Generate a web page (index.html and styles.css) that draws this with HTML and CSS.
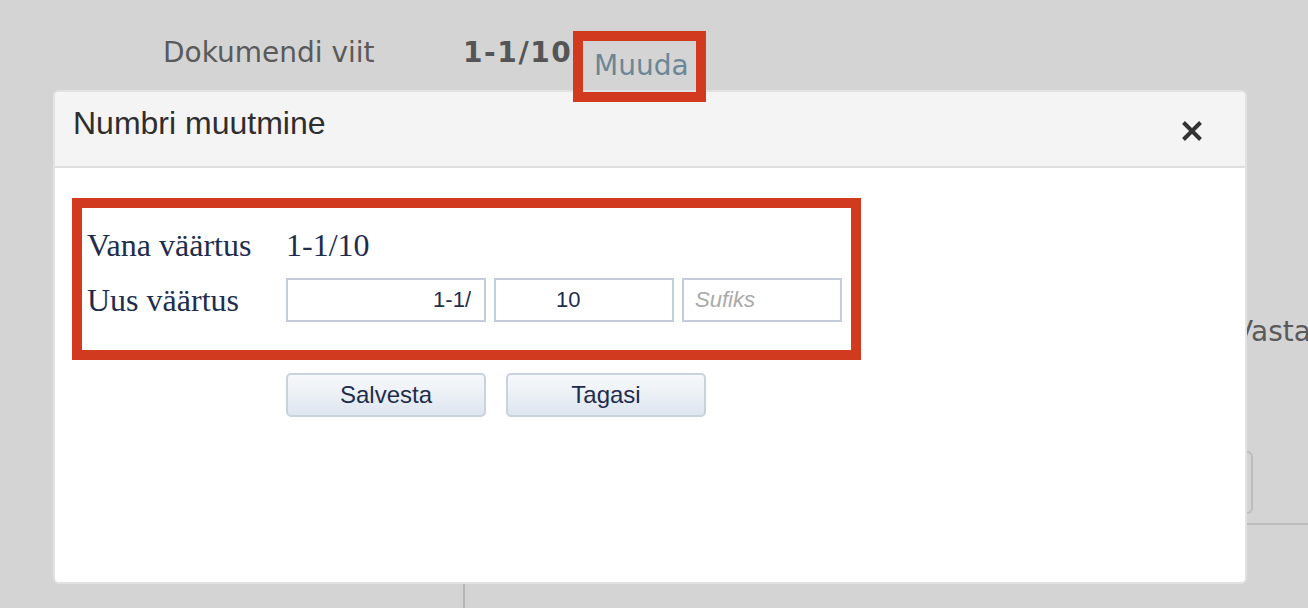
FILE: index.html
```html
<!DOCTYPE html>
<html lang="et">
<head>
<meta charset="utf-8">
<title>Numbri muutmine</title>
<link rel="stylesheet" href="styles.css">
</head>
<body>
<div class="page">
  <div class="doc-row">
    <span class="doc-label">Dokumendi viit</span>
    <span class="doc-value">1-1/10</span>
    <span class="mark mark-link"><a class="link" href="#">Muuda</a></span>
  </div>
  <div class="resp-row"><span class="resp-label">Vastamise tähtaeg</span></div>
  <div class="box-row"><div class="textbox"></div></div>
  <div class="lower"><div class="lower-col"></div></div>
</div>

<div class="dialog">
  <div class="dialog-head">
    <h2 class="dialog-title">Numbri muutmine</h2>
    <button class="close" type="button" aria-label="Sulge">
      <svg width="22" height="22" viewBox="0 0 22 22"><path d="M2.5 2.5L19.5 19.5M19.5 2.5L2.5 19.5" stroke="#333" stroke-width="4" fill="none"/></svg>
    </button>
  </div>
  <div class="dialog-body">
    <div class="mark mark-form">
      <div class="form-grid">
        <div class="f-label">Vana väärtus</div>
        <div class="f-value">1-1/10</div>
        <div class="f-label">Uus väärtus</div>
        <div class="f-inputs">
          <input class="inp inp-prefix" type="text" value="1-1/">
          <input class="inp inp-num" type="text" value="10">
          <input class="inp inp-suffix" type="text" placeholder="Sufiks">
        </div>
      </div>
    </div>
    <div class="actions">
      <button class="btn" type="button">Salvesta</button>
      <button class="btn" type="button">Tagasi</button>
    </div>
  </div>
</div>
</body>
</html>
```
FILE: styles.css
```css
html, body {
  margin: 0;
  width: 1308px;
  height: 608px;
  overflow: hidden;
}
body {
  position: relative;
  background: #d4d4d4;
  font-family: "DejaVu Sans", Verdana, sans-serif;
}

/* background page */
.page {
  padding-top: 31px;
}
.doc-row {
  display: flex;
  align-items: flex-start;
  padding-left: 163px;
}
.doc-label {
  width: 300px;
  margin-top: 5px;
  font-size: 28px;
  line-height: 34px;
  color: #5a5a5a;
  white-space: nowrap;
}
.doc-value {
  width: 110px;
  flex: none;
  margin-top: 5px;
  font-size: 28px;
  line-height: 34px;
  font-weight: bold;
  color: #555;
  letter-spacing: 1.6px;
  white-space: nowrap;
}
.mark {
  border: 10px solid #d13a1f;
}
.mark-link {
  position: relative;
  z-index: 2;
  padding: 8px 7px 9px 11px;
}
.link {
  display: block;
  font-size: 28px;
  line-height: 34px;
  color: #6b8797;
  text-decoration: none;
}
.resp-row {
  margin-top: 213px;
  padding-left: 1234px;
  height: 34px;
  overflow: hidden;
}
.resp-label {
  display: block;
  white-space: nowrap;
  font-size: 28px;
  line-height: 34px;
  color: #5a5a5a;
}
.box-row {
  margin-top: 102px;
  padding-left: 463px;
}
.textbox {
  width: 790px;
  height: 63px;
  box-sizing: border-box;
  border: 2px solid #bdbdbd;
  border-radius: 6px;
}
.lower {
  margin: 9px 0 0 463px;
  border-top: 2px solid #bdbdbd;
}
.lower-col {
  height: 100px;
  border-left: 2px solid #b5b5b5;
}

/* dialog */
.dialog {
  position: absolute;
  left: 53px;
  top: 90px;
  z-index: 1;
  width: 1194px;
  height: 494px;
  box-sizing: border-box;
  display: flex;
  flex-direction: column;
  background: #fff;
  border: 2px solid #e2e2e2;
  border-radius: 6px;
  overflow: hidden;
}
.dialog-head {
  display: flex;
  justify-content: space-between;
  align-items: flex-start;
  height: 76px;
  box-sizing: border-box;
  padding: 15px 42px 0 18px;
  background: #f4f4f4;
  border-bottom: 2px solid #dedede;
}
.dialog-title {
  margin: 0;
  font-family: "Liberation Sans", Arial, sans-serif;
  font-weight: 400;
  font-size: 32px;
  line-height: 32px;
  color: #2e2e2e;
}
.close {
  margin-top: 13px;
  width: 22px;
  height: 22px;
  padding: 0;
  border: 0;
  background: none;
  cursor: pointer;
}
.close svg {
  display: block;
}
.dialog-body {
  padding: 30px 17px 0 17px;
}
.mark-form {
  width: 789px;
  box-sizing: border-box;
  padding: 17px 0 28px 5px;
}
.form-grid {
  display: grid;
  grid-template-columns: 199px auto;
  row-gap: 13px;
  align-items: center;
}
.f-label,
.f-value {
  font-family: "Liberation Serif", "Times New Roman", serif;
  font-size: 32px;
  line-height: 40px;
  color: #1e2d4e;
}
.f-inputs {
  display: flex;
  gap: 8px;
}
.inp {
  box-sizing: border-box;
  height: 44px;
  margin: 0;
  border: 2px solid #c3cddb;
  border-radius: 0;
  background: #fff;
  font-family: "Liberation Sans", Arial, sans-serif;
  font-size: 22px;
  color: #1e2d4e;
  outline: none;
}
.inp-prefix {
  width: 200px;
  padding: 0 13px 0 6px;
  text-align: right;
}
.inp-num {
  width: 180px;
  padding: 0 6px 0 60px;
}
.inp-suffix {
  width: 160px;
  padding: 0 6px 0 11px;
}
.inp-suffix::placeholder {
  color: #a9a9a9;
  font-style: italic;
}
.actions {
  display: flex;
  gap: 20px;
  margin-top: 13px;
  padding-left: 214px;
}
.btn {
  width: 200px;
  height: 44px;
  box-sizing: border-box;
  padding: 0;
  border: 2px solid #cad2dd;
  border-radius: 5px;
  background: linear-gradient(to bottom, #f6f8fb 0%, #edf1f6 45%, #dde5f0 100%);
  font-family: "Liberation Sans", Arial, sans-serif;
  font-size: 24px;
  line-height: 24px;
  color: #1e2d4e;
  cursor: pointer;
}
```
